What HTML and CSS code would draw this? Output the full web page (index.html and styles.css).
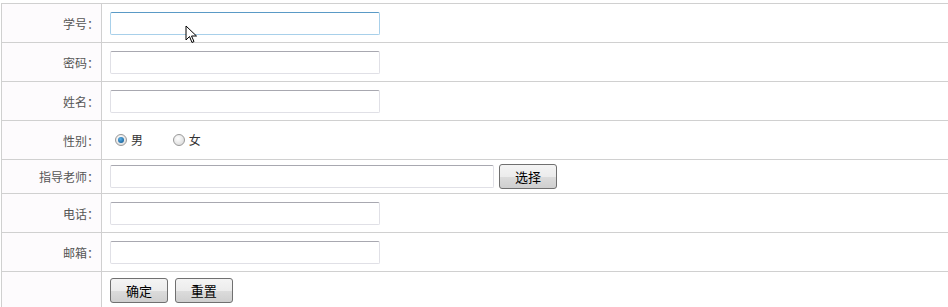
FILE: index.html
```html
<!DOCTYPE html>
<html lang="zh-CN">
<head>
    <meta charset="UTF-8">
    <title>学生注册</title>
    <link rel="stylesheet" href="styles.css">
</head>
<body>
    <form class="reg-form">
        <table class="form-table">
            <tr class="row-tall">
                <td class="label">学号：</td>
                <td class="field"><input type="text" class="txt txt-focus"></td>
            </tr>
            <tr class="row-tall">
                <td class="label">密码：</td>
                <td class="field"><input type="password" class="txt"></td>
            </tr>
            <tr class="row-tall">
                <td class="label">姓名：</td>
                <td class="field"><input type="text" class="txt"></td>
            </tr>
            <tr class="row-tall">
                <td class="label">性别：</td>
                <td class="field">
                    <label class="radio"><span class="dot checked"></span>男</label>
                    <label class="radio"><span class="dot"></span>女</label>
                </td>
            </tr>
            <tr class="row-short">
                <td class="label">指导老师：</td>
                <td class="field"><input type="text" class="txt txt-wide"><button type="button" class="btn btn-pick">选择</button></td>
            </tr>
            <tr class="row-tall">
                <td class="label">电话：</td>
                <td class="field"><input type="text" class="txt"></td>
            </tr>
            <tr class="row-tall">
                <td class="label">邮箱：</td>
                <td class="field"><input type="text" class="txt"></td>
            </tr>
            <tr class="row-tall">
                <td class="label"></td>
                <td class="field field-btns">
                    <button type="button" class="btn">确定</button>
                    <button type="button" class="btn">重置</button>
                </td>
            </tr>
        </table>
    </form>

    <!-- mouse pointer -->
    <svg class="pointer" width="14" height="20" viewBox="0 0 14 20">
        <path d="M1 1 L1 15 L4.5 11.5 L7 17.5 L9 16.5 L6.5 11 L11.5 11 Z" fill="#fff" stroke="#000" stroke-width="1"/>
    </svg>
</body>
</html>
```

FILE: styles.css
```css
body {
    margin: 0;
    padding: 0;
    background-color: #fff;
    font-family: "Noto Sans CJK SC", "Liberation Sans", sans-serif;
    font-size: 12px;
    color: #333;
    overflow: hidden;
}

.reg-form {
    margin: 3px 0 0 1px;
}

/* Table */
.form-table {
    width: 100%;
    border-collapse: collapse;
}

.form-table td {
    border: 1px solid #d0d0d0;
    padding: 0;
}

.form-table td.field {
    border-right: none;
}

.row-tall td {
    height: 38px;
}

.row-short td {
    height: 33px;
}

.label {
    width: 100px;
    padding-right: 2px !important;
    text-align: right;
    background-color: #fdfbfd;
    color: #555;
    box-sizing: border-box;
}

.field {
    padding-left: 8px !important;
}

/* Inputs */
.txt {
    display: inline-block;
    width: 270px;
    height: 23px;
    box-sizing: border-box;
    border: 1px solid #e0e0e6;
    border-top-color: #a8a8b0;
    border-radius: 2px;
    vertical-align: middle;
    margin: 0;
    padding: 0 3px;
    font-size: 12px;
}

.txt-focus {
    border-color: #a8d0ea;
    border-top-color: #5a9ac6;
}

.txt-wide {
    width: 384px;
    margin-right: 5px;
}

/* Radios */
.radio {
    display: inline-flex;
    align-items: center;
    margin-left: 5px;
    margin-right: 22px;
    color: #333;
}

.dot {
    width: 10px;
    height: 10px;
    border: 1px solid #9a9a9a;
    border-radius: 50%;
    background: radial-gradient(circle at 40% 35%, #fff, #d4d4d4);
    margin-right: 4px;
    position: relative;
}

.dot.checked::after {
    content: "";
    position: absolute;
    left: 2px;
    top: 2px;
    width: 6px;
    height: 6px;
    border-radius: 50%;
    background: radial-gradient(circle at 40% 35%, #5ab0e8, #0a4f86);
}

/* Buttons */
.btn {
    height: 25px;
    width: 58px;
    border: 1px solid #707070;
    border-radius: 3px;
    background: linear-gradient(#f4f4f4, #ececec 50%, #dcdcdc 51%, #cfcfcf);
    font-family: "Noto Sans CJK SC", sans-serif;
    font-size: 13px;
    color: #000;
    padding: 0;
    vertical-align: middle;
}

.field-btns .btn {
    margin-right: 4px;
    vertical-align: top;
}

.field-btns {
    vertical-align: top;
    padding-top: 6px !important;
}

/* Pointer overlay */
.pointer {
    position: absolute;
    left: 185px;
    top: 25px;
}
```
